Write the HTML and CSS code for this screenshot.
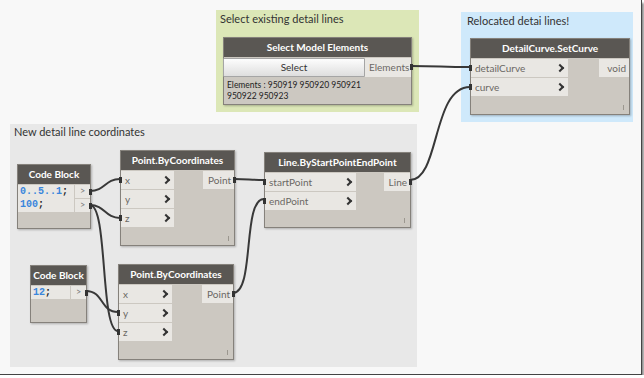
FILE: index.html
```html
<!DOCTYPE html>
<html lang="en">
<head>
    <meta charset="UTF-8">
    <meta name="viewport" content="width=device-width, initial-scale=1.0">
    <title>Dynamo graph - relocate detail lines</title>
    <link rel="stylesheet" href="styles.css">
</head>
<body>
    <div class="canvas">
        <!-- groups -->
        <div class="group group-select"><div class="group-title">Select existing detail lines</div></div>
        <div class="group group-relocate"><div class="group-title">Relocated detai lines!</div></div>
        <div class="group group-coords"><div class="group-title">New detail line coordinates</div></div>

        <!-- wires -->
        <svg class="wires" width="641" height="374" viewBox="0 0 641 374">
            <g class="wire">
                <path d="M411,66 C440,66 441,67 470,67"/>
                <path d="M410,180 C440,180 432,87 470,87"/>
                <path d="M90,191 C105,191 105,179 120,179"/>
                <path d="M90,205 C105,205 105,218 120,218"/>
                <path d="M90,205 C108,205 100,331 118,331"/>
                <path d="M86,291 C104,291 100,312 118,312"/>
                <path d="M234,179 C249,179 249,180 264,180"/>
                <path d="M233,293 C255,293 242,199 264,199"/>
            </g>
        </svg>

        <!-- nodes -->
        <div class="node n-select">
            <div class="node-head">Select Model Elements</div>
            <div class="select-row">
                <div class="select-btn">Select</div>
                <div class="out-port">Elements<span class="pin pin-out"></span></div>
            </div>
            <div class="select-info">Elements : 950919 950920 950921<br>950922 950923</div>
        </div>

        <div class="node n-setcurve">
            <div class="node-head">DetailCurve.SetCurve</div>
            <div class="node-body">
                <div class="inputs">
                    <div class="in-port"><span class="pin pin-in"></span>detailCurve<i class="chev"></i></div>
                    <div class="in-port"><span class="pin pin-in"></span>curve<i class="chev"></i></div>
                </div>
                <div class="out-port">void</div>
            </div>
            <span class="grip"></span>
        </div>

        <div class="node n-code1">
            <div class="node-head">Code Block</div>
            <div class="code-body">
                <div class="code-text">
                    <div class="code-line"><span class="num">0..5..1</span>;</div>
                    <div class="code-line"><span class="num">100</span>;</div>
                </div>
                <div class="code-outs">
                    <div class="code-out">&gt;<span class="pin pin-out"></span></div>
                    <div class="code-out">&gt;<span class="pin pin-out"></span></div>
                </div>
            </div>
        </div>

        <div class="node n-code2">
            <div class="node-head">Code Block</div>
            <div class="code-body">
                <div class="code-text">
                    <div class="code-line"><span class="num">12</span>;</div>
                </div>
                <div class="code-outs">
                    <div class="code-out">&gt;<span class="pin pin-out"></span></div>
                </div>
            </div>
        </div>

        <div class="node n-point1">
            <div class="node-head">Point.ByCoordinates</div>
            <div class="node-body">
                <div class="inputs">
                    <div class="in-port"><span class="pin pin-in"></span>x<i class="chev"></i></div>
                    <div class="in-port">y<i class="chev"></i></div>
                    <div class="in-port"><span class="pin pin-in"></span>z<i class="chev"></i></div>
                </div>
                <div class="out-port">Point<span class="pin pin-out"></span></div>
            </div>
            <span class="grip"></span>
        </div>

        <div class="node n-point2">
            <div class="node-head">Point.ByCoordinates</div>
            <div class="node-body">
                <div class="inputs">
                    <div class="in-port">x<i class="chev"></i></div>
                    <div class="in-port"><span class="pin pin-in"></span>y<i class="chev"></i></div>
                    <div class="in-port"><span class="pin pin-in"></span>z<i class="chev"></i></div>
                </div>
                <div class="out-port">Point<span class="pin pin-out"></span></div>
            </div>
            <span class="grip"></span>
        </div>

        <div class="node n-line">
            <div class="node-head">Line.ByStartPointEndPoint</div>
            <div class="node-body">
                <div class="inputs">
                    <div class="in-port"><span class="pin pin-in"></span>startPoint<i class="chev"></i></div>
                    <div class="in-port"><span class="pin pin-in"></span>endPoint<i class="chev"></i></div>
                </div>
                <div class="out-port">Line<span class="pin pin-out"></span></div>
            </div>
            <span class="grip"></span>
        </div>
    </div>
</body>
</html>
```

FILE: styles.css
```css
body {
    margin: 0;
    padding: 0;
    background-color: #fff;
    font-family: Lato, "Open Sans", sans-serif;
}
.canvas {
    position: relative;
    width: 641px;
    height: 374px;
    background-color: #f8f8f8;
    border-right: 1px solid #444;
    border-bottom: 1px solid #444;
    box-shadow: 2px 3px 2px rgba(0, 0, 0, 0.45);
    overflow: hidden;
}

/* groups */
.group {
    position: absolute;
}
.group-title {
    font-size: 11px;
    color: #333;
    padding: 2px 4px;
    line-height: 13px;
}
.group-select {
    left: 216px;
    top: 10px;
    width: 203px;
    height: 102px;
    background-color: #dce7b7;
}
.group-relocate {
    left: 461px;
    top: 12px;
    width: 172px;
    height: 110px;
    background-color: #cfe9fb;
}
.group-relocate .group-title {
    padding-left: 6px;
}
.group-coords {
    left: 10px;
    top: 124px;
    width: 407px;
    height: 243px;
    background-color: #e8e8e8;
}
.group-coords .group-title {
    padding-top: 1px;
}

/* wires */
.wires {
    position: absolute;
    left: 0;
    top: 0;
}
.wire path {
    fill: none;
    stroke: #383838;
    stroke-width: 2;
}

/* nodes */
.node {
    position: absolute;
    box-sizing: border-box;
    background-color: #ccc8c1;
    border: 1px solid #85817b;
    box-shadow: 1px 1px 2px rgba(0, 0, 0, 0.25);
    font-size: 10px;
    color: #6b6864;
}
.node-head {
    height: 19px;
    line-height: 19px;
    background-color: #5a5753;
    color: #fff;
    font-weight: bold;
    font-size: 10px;
    text-align: center;
    white-space: nowrap;
}
.node-body {
    display: flex;
    justify-content: space-between;
    align-items: flex-start;
    padding-top: 1px;
}
.inputs {
    display: flex;
    flex-direction: column;
    gap: 1px;
}
.in-port {
    position: relative;
    height: 18px;
    display: flex;
    align-items: center;
    justify-content: space-between;
    padding: 0 5px 0 4px;
    background-color: #e9e7e3;
}
.out-port {
    position: relative;
    height: 18px;
    line-height: 18px;
    padding: 0 3px 0 4px;
    background-color: #e9e7e3;
    text-align: right;
}
.chev {
    width: 4px;
    height: 4px;
    border-right: 2px solid #333;
    border-bottom: 2px solid #333;
    transform: rotate(-45deg);
}
.pin {
    position: absolute;
    top: 6px;
    width: 3px;
    height: 6px;
    background-color: #333;
}
.pin-in {
    left: -2px;
}
.pin-out {
    right: -2px;
}
.grip {
    position: absolute;
    right: 5px;
    bottom: 4px;
    width: 1px;
    height: 5px;
    background-color: #9b978f;
}

.n-select {
    left: 223px;
    top: 37px;
    width: 189px;
    height: 68px;
}
.select-row {
    display: flex;
    padding-top: 1px;
}
.select-btn {
    flex: 1;
    height: 17px;
    line-height: 17px;
    text-align: center;
    color: #333;
    border: 1px solid #a5a5a5;
    border-radius: 1px;
    background: linear-gradient(#fdfdfd, #dedede);
    margin-left: -1px;
}
.n-select .out-port {
    width: 39px;
    height: 19px;
    line-height: 19px;
}
.select-info {
    font-size: 8.5px;
    line-height: 11px;
    color: #222;
    padding: 3px 3px;
}

.n-setcurve {
    left: 470px;
    top: 38px;
    width: 160px;
    height: 77px;
}
.n-setcurve .inputs {
    width: 97px;
}
.n-setcurve .out-port {
    width: 23px;
}

.n-point1 {
    left: 120px;
    top: 150px;
    width: 115px;
    height: 96px;
}
.n-point2 {
    left: 118px;
    top: 264px;
    width: 116px;
    height: 96px;
}
.n-point1 .inputs,
.n-point2 .inputs {
    width: 53px;
}
.n-point1 .out-port,
.n-point2 .out-port {
    width: 24px;
}

.n-line {
    left: 264px;
    top: 152px;
    width: 147px;
    height: 76px;
}
.n-line .inputs {
    width: 91px;
}
.n-line .out-port {
    width: 19px;
}

/* code blocks */
.code-body {
    display: flex;
    padding-top: 1px;
}
.code-text {
    flex: 1;
    background-color: #e9e7e3;
    font-family: "Liberation Mono", "DejaVu Sans Mono", monospace;
    font-size: 10px;
    font-weight: bold;
    color: #222;
    padding-left: 2px;
}
.code-line {
    height: 13px;
    line-height: 13px;
}
.num {
    color: #3a86dc;
}
.code-outs {
    display: flex;
    flex-direction: column;
    gap: 1px;
    width: 15px;
    margin-left: 1px;
}
.code-out {
    position: relative;
    height: 13px;
    line-height: 12px;
    text-align: center;
    background-color: #e9e7e3;
    color: #777;
    font-size: 9px;
}
.code-out .pin {
    top: 4px;
}
.n-code1 {
    left: 17px;
    top: 164px;
    width: 74px;
    height: 65px;
}
.n-code2 {
    left: 30px;
    top: 265px;
    width: 57px;
    height: 58px;
}
```
